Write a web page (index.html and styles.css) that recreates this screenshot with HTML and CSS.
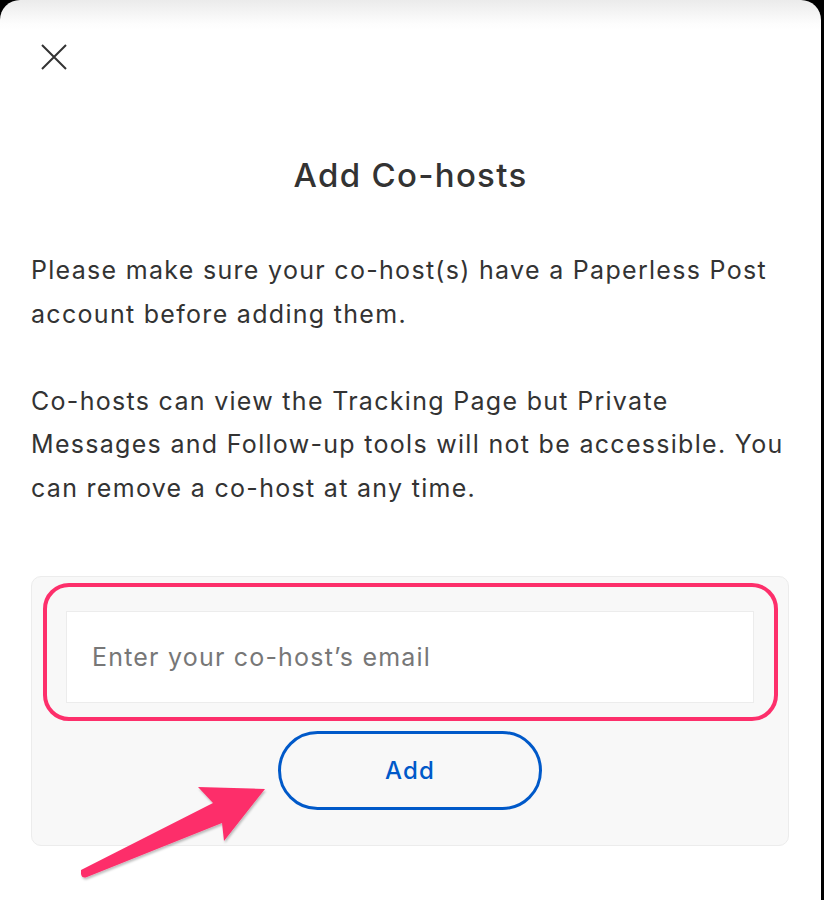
FILE: index.html
```html
<!DOCTYPE html>
<html lang="en">
<head>
    <meta charset="UTF-8">
    <meta name="viewport" content="width=device-width, initial-scale=1.0">
    <title>Add Co-hosts</title>
    <link rel="stylesheet" href="styles.css">
</head>
<body>
    <div class="sheet">
        <button class="close" type="button" aria-label="Close">
            <svg width="26" height="26" viewBox="0 0 26 26">
                <path d="M1 1 L25 25 M25 1 L1 25" stroke="#333" stroke-width="2" fill="none"/>
            </svg>
        </button>

        <h1 class="title">Add Co-hosts</h1>

        <div class="intro">
            <p>Please make sure your co-host(s) have a Paperless Post account before adding them.</p>
            <p>Co-hosts can view the Tracking Page but Private Messages and Follow-up tools will not be accessible. You can remove a co-host at any time.</p>
        </div>

        <form class="panel">
            <input type="email" class="email" placeholder="Enter your co-host’s email">
            <button type="submit" class="add">Add</button>
            <!-- annotation -->
            <span class="highlight"></span>
        </form>

        <svg class="arrow" width="200" height="110" viewBox="70 780 200 110">
            <defs>
                <filter id="shadow" x="-10%" y="-10%" width="130%" height="130%">
                    <feDropShadow dx="1" dy="2" stdDeviation="1.2" flood-color="#000" flood-opacity="0.25"/>
                </filter>
            </defs>
            <path d="M81 870 L213 803 L198 787 L265 789 L224 841 L222 823 L87 877 Q82 879 81 874 Z" fill="#fd2f6b" filter="url(#shadow)"/>
        </svg>
    </div>
</body>
</html>
```

FILE: styles.css
```css
body {
    margin: 0;
    background: #000;
    font-family: Inter, "Open Sans", sans-serif;
    color: #333;
}

.sheet {
    position: relative;
    margin-right: 3px;
    min-height: 900px;
    background: linear-gradient(#ebebeb 0, #fdfdfd 24px, #fff 30px);
    border-radius: 20px 20px 0 0;
    overflow: hidden;
}

.close {
    display: block;
    margin: 0;
    padding: 0;
    border: none;
    background: none;
    position: absolute;
    left: 41px;
    top: 44px;
    cursor: pointer;
}

.title {
    margin: 0;
    padding-top: 155px;
    font-size: 33px;
    line-height: 40px;
    font-weight: 500;
    letter-spacing: 1.3px;
    text-align: center;
}

.intro {
    padding: 54px 31px 0 31px;
    font-size: 25px;
    line-height: 43.6px;
    letter-spacing: 1.3px;
}

.intro p {
    margin: 0 0 43.6px 0;
}

.panel {
    position: relative;
    margin: 65px 32px 0 31px;
    padding: 34px 34px 35px 34px;
    background: #f8f8f8;
    border: 1px solid #ececec;
    border-radius: 10px;
    display: flex;
    flex-direction: column;
    align-items: center;
    gap: 28px;
}

.email {
    width: 100%;
    height: 92px;
    box-sizing: border-box;
    padding: 0 25px;
    border: 1px solid #ececec;
    background: #fff;
    font-family: Inter, sans-serif;
    font-size: 25px;
    letter-spacing: 1.2px;
    color: #333;
    outline: none;
    flex-shrink: 0;
}

.email::placeholder {
    color: #777;
}

.add {
    width: 264px;
    height: 79px;
    flex-shrink: 0;
    border: 3px solid #0059c9;
    border-radius: 40px;
    background: transparent;
    color: #0059c9;
    font-family: Inter, sans-serif;
    font-size: 24px;
    font-weight: 500;
    letter-spacing: 1.2px;
    cursor: pointer;
}

/* pink annotation box */
.highlight {
    position: absolute;
    left: 11px;
    top: 6px;
    width: 727px;
    height: 130px;
    border: 4px solid #fd2f6b;
    border-radius: 26px;
    pointer-events: none;
}

.arrow {
    position: absolute;
    left: 70px;
    top: 780px;
}
```
